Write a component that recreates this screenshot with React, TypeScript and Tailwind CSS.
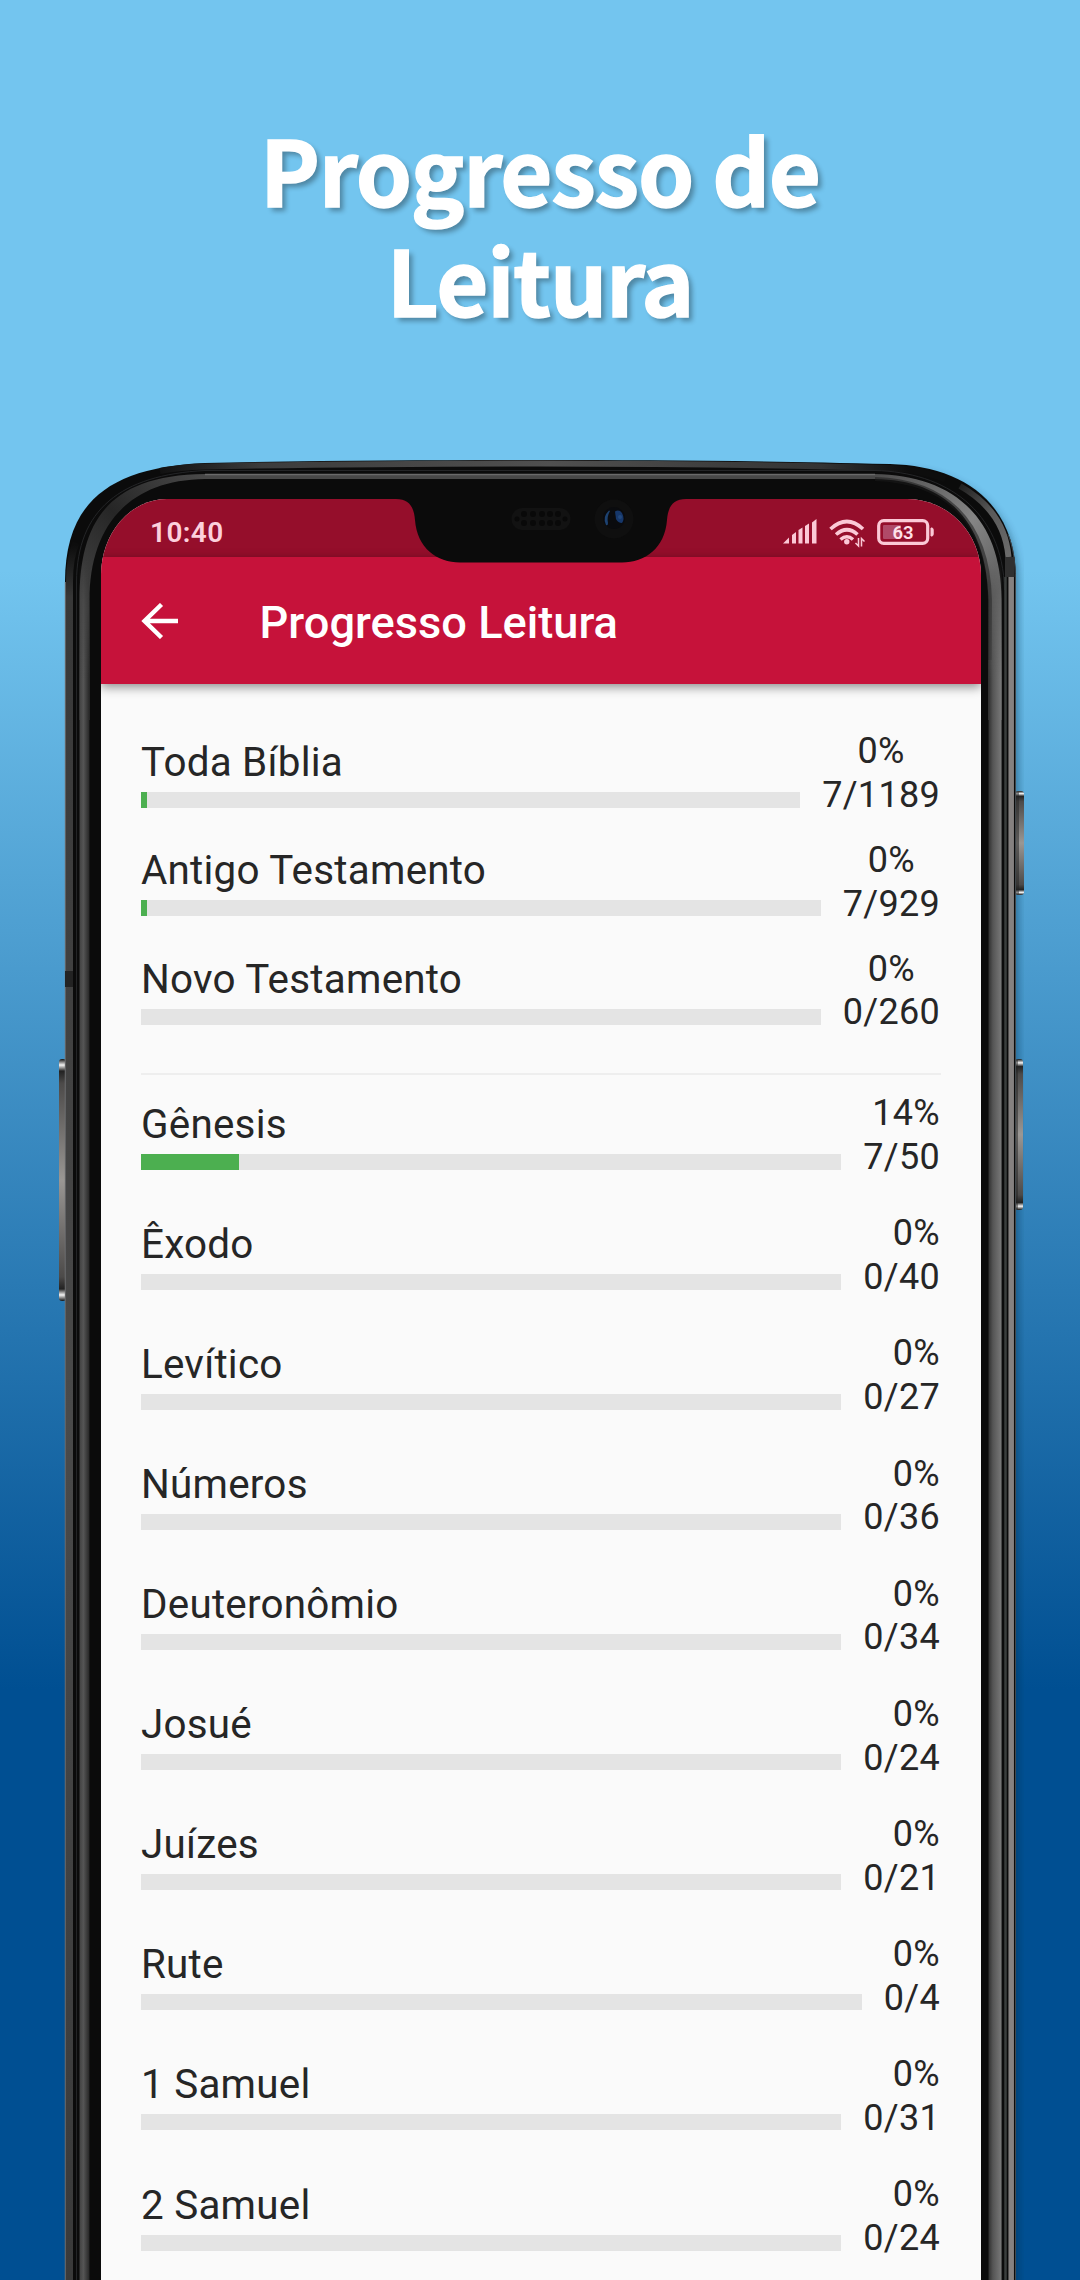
import React from 'react';

interface Progress {
  name: string;
  read: number;
  total: number;
}

const totals: Progress[] = [
  { name: 'Toda Bíblia', read: 7, total: 1189 },
  { name: 'Antigo Testamento', read: 7, total: 929 },
  { name: 'Novo Testamento', read: 0, total: 260 },
];

const books: Progress[] = [
  { name: 'Gênesis', read: 7, total: 50 },
  { name: 'Êxodo', read: 0, total: 40 },
  { name: 'Levítico', read: 0, total: 27 },
  { name: 'Números', read: 0, total: 36 },
  { name: 'Deuteronômio', read: 0, total: 34 },
  { name: 'Josué', read: 0, total: 24 },
  { name: 'Juízes', read: 0, total: 21 },
  { name: 'Rute', read: 0, total: 4 },
  { name: '1 Samuel', read: 0, total: 31 },
  { name: '2 Samuel', read: 0, total: 24 },
];

const ProgressRow: React.FC<{ item: Progress; centered?: boolean }> = ({ item, centered }) => {
  const percent = Math.floor((item.read / item.total) * 100);
  // anything started shows at least a sliver
  const width = item.read === 0 ? '0px' : percent === 0 ? '5.5px' : `${percent}%`;

  return (
    <div className="flex h-[87.600px] gap-[22px]">
      <div className="flex-1 pt-[9.200px]">
        <div className="h-[47px] text-[40.4px] leading-[47px] tracking-[0.230px] whitespace-nowrap">{item.name}</div>
        <div className="mt-[6px] h-[16px] bg-[#e4e4e4]">
          <div className="h-full bg-[#4caf50]" style={{ width }} />
        </div>
      </div>
      <div className={`pt-[0.800px] text-[36px] leading-[43.8px] tracking-[0.3px] ${centered ? 'text-center' : 'text-right'}`}>
        <div>{percent}%</div>
        <div>{item.read}/{item.total}</div>
      </div>
    </div>
  );
};

const PhoneFrame: React.FC = () => (
  <svg className="absolute inset-0" width="1080" height="2280" viewBox="0 0 1080 2280" fill="none">
    <defs>
      <linearGradient id="topRim" x1="150" x2="950" y1="0" y2="0" gradientUnits="userSpaceOnUse">
        <stop offset="0" stopColor="#0d0d0d" />
        <stop offset=".14" stopColor="#3c3c3c" />
        <stop offset=".5" stopColor="#505050" />
        <stop offset=".84" stopColor="#333" />
        <stop offset=".95" stopColor="#0d0d0d" />
      </linearGradient>
      <linearGradient id="leftRim" x1="0" x2="0" y1="545" y2="2280" gradientUnits="userSpaceOnUse">
        <stop offset="0" stopColor="#0d0d0d" />
        <stop offset=".03" stopColor="#383838" />
        <stop offset=".5" stopColor="#4a4a4a" />
        <stop offset="1" stopColor="#3a3a3a" />
      </linearGradient>
      <linearGradient id="leftInner" x1="79" x2="90" y1="0" y2="0" gradientUnits="userSpaceOnUse">
        <stop offset="0" stopColor="#3f3f3f" />
        <stop offset=".4" stopColor="#555" />
        <stop offset="1" stopColor="#222" />
      </linearGradient>
      <linearGradient id="leftCorner" x1="200" x2="80" y1="476" y2="600" gradientUnits="userSpaceOnUse">
        <stop offset="0" stopColor="#484848" />
        <stop offset=".5" stopColor="#262626" />
        <stop offset="1" stopColor="#444" />
      </linearGradient>
      <linearGradient id="rightInner" x1="988" x2="1002" y1="0" y2="0" gradientUnits="userSpaceOnUse">
        <stop offset="0" stopColor="#2b2b2b" />
        <stop offset=".35" stopColor="#555" />
        <stop offset=".9" stopColor="#757575" />
        <stop offset="1" stopColor="#8f8f8f" />
      </linearGradient>
      <linearGradient id="rightCorner" x1="875" x2="998" y1="478" y2="590" gradientUnits="userSpaceOnUse">
        <stop offset="0" stopColor="#4c4c4c" />
        <stop offset=".6" stopColor="#858585" />
        <stop offset="1" stopColor="#5e5e5e" />
      </linearGradient>
      <linearGradient id="rightRim" x1="950" x2="1014" y1="480" y2="560" gradientUnits="userSpaceOnUse">
        <stop offset="0" stopColor="#111" />
        <stop offset=".5" stopColor="#5a5a5a" />
        <stop offset="1" stopColor="#6e6e6e" />
      </linearGradient>
      <linearGradient id="fadeIn" x1="0" x2="0" y1="560" y2="680" gradientUnits="userSpaceOnUse">
        <stop offset="0" stopColor="#000" />
        <stop offset="1" stopColor="#fff" />
      </linearGradient>
      <mask id="sideMask" maskUnits="userSpaceOnUse" x="0" y="560" width="1080" height="1720">
        <rect y="560" width="1080" height="1720" fill="url(#fadeIn)" />
      </mask>
      <linearGradient id="button" x1="0" x2="0" y1="0" y2="1">
        <stop offset="0" stopColor="#111" />
        <stop offset=".025" stopColor="#f4f4f4" />
        <stop offset=".05" stopColor="#222" />
        <stop offset=".1" stopColor="#4c4a49" />
        <stop offset=".5" stopColor="#9a9794" />
        <stop offset=".9" stopColor="#4c4a49" />
        <stop offset=".95" stopColor="#222" />
        <stop offset=".975" stopColor="#f4f4f4" />
        <stop offset="1" stopColor="#111" />
      </linearGradient>
      <filter id="soft" x="-5%" y="-5%" width="110%" height="110%">
        <feGaussianBlur stdDeviation="4" />
      </filter>
    </defs>

    {/* shadow cast to the right */}
    <path d="M900 470C960 472 1018 505 1018 582V2290H900Z" fill="#062a45" opacity=".45" filter="url(#soft)" />

    {/* side buttons */}
    <rect x="59" y="1059" width="7" height="242" rx="3" fill="url(#button)" />
    <rect x="1015" y="791" width="9" height="104" rx="3" fill="url(#button)" />
    <rect x="1016" y="792" width="3" height="102" fill="#222" opacity=".5" />
    <rect x="1015" y="1059" width="8" height="151" rx="3" fill="url(#button)" />
    <rect x="1016" y="1060" width="2" height="149" fill="#222" opacity=".5" />

    {/* body */}
    <path d="M65 2280V582C65 500 112 467 205 463C330 460.5 430 460 540 460S750 460.5 890 464C960 466 1016 500 1016 580V2280Z" fill="#0b0b0b" />
    <path d="M160 471C176 468 190 467 205 466.500C330 464 430 463.500 540 463.500S750 464 890 468C910 469 930 473 945 479" stroke="url(#topRim)" strokeWidth="6" />
    <path d="M69.500 2280V582C69.500 565 71.500 553 76 543" stroke="url(#leftRim)" strokeWidth="7" />
    <path d="M65.300 2280V582" stroke="#77797b" strokeWidth="1" />
    <path d="M76.500 2280V582C77 510 120 475 205 470.500H875C945 472 1003 510 1004.500 590" stroke="#242527" strokeWidth="1" />
    <rect x="65" y="971" width="8" height="16" fill="#232323" />

    {/* inner rim */}
    <path d="M205 474H875V479H205C125 480 89.500 530 89.500 600V720H79.500V600C79.500 525 105 475 205 474Z" fill="url(#leftCorner)" />
    <path d="M205 474.500H875" stroke="#6a6a6a" strokeWidth="1.500" />
    <path d="M79.500 2280V560H89.500V2280Z" fill="url(#leftInner)" mask="url(#sideMask)" />
    <path d="M875 474C945 475 1001.500 510 1001.500 600V720H988.500V600C987 520 945 480 875 479Z" fill="url(#rightCorner)" />
    <path d="M875 479C943 481 988 518 990 600V660" stroke="#1c1c1c" strokeWidth="4" opacity=".55" />
    <path d="M988.500 2280V560H1001.500V2280Z" fill="url(#rightInner)" mask="url(#sideMask)" />

    {/* right outer rim */}
    <path d="M960 486C990 503 1006 527 1008.500 557" stroke="url(#rightRim)" strokeWidth="6" />
    <path d="M1011.200 2280V577" stroke="#858180" strokeWidth="5.500" />
    <path d="M1005.500 2280V577" stroke="#3b3f3e" strokeWidth="2.500" />
    <path d="M1015.500 2280V580C1015.500 562 1013 547 1008 534" stroke="#41484c" strokeWidth="1" />
    <rect x="1005" y="557" width="9.500" height="20" fill="#303030" />
  </svg>
);

const Notch: React.FC = () => (
  <svg className="absolute left-[295px] top-0" width="290" height="64" viewBox="396 499 290 64">
    <path d="M396 498V499C410 499 414 508 415 520C417 548 437 562.500 460 562.500H622C645 562.500 665 548 667 520C668 508 672 499 686 499V498Z" fill="#0b0b0b" />
    <rect x="511.500" y="508" width="59" height="22" rx="11" fill="#121212" />
    {[524, 533, 542, 550, 558].map((x) => (
      <g key={x} fill="#090909">
        <circle cx={x} cy="514" r="3" />
        <circle cx={x} cy="523" r="3" />
      </g>
    ))}
    <circle cx="517" cy="519" r="2.500" fill="#090909" />
    <circle cx="565" cy="519" r="2.500" fill="#090909" />
    <circle cx="614" cy="519" r="19.500" fill="#0f0f0f" />
    <circle cx="614" cy="518" r="11" fill="#0a0b0e" />
    <path d="M609 510.500Q602 517 606 525Q608 526 608 523Q606.500 517 610 511Z" fill="#1d4270" />
    <path d="M615 511.500Q619 509 622 513Q625 519 622 523Q618 523 616 519Z" fill="#16376a" />
    <circle cx="620" cy="517" r="2" fill="#23487c" />
  </svg>
);

const StatusIcons: React.FC = () => (
  <svg className="mt-[17px]" width="154" height="32" viewBox="781 516 154 32" fill="none">
    <g fill="#fbc9d6">
      <path d="M783 543.500L789 537.500V543.500Z" />
      <path d="M792 543.500V535L796 532V543.500Z" />
      <path d="M798.500 543.500V530L802.500 527.500V543.500Z" />
      <path d="M805 543.500V526L809 523.500V543.500Z" />
      <path d="M812 543.500V522.500L816.500 519V543.500Z" />
    </g>
    <g stroke="#fbc9d6" strokeWidth="3.600">
      <path d="M830.500 529Q847 514 863 529" />
      <path d="M836 534.500Q847 525 857.500 534.500" />
      <path d="M840.500 539.500Q847 534 853 539.500" />
    </g>
    <circle cx="846.800" cy="541.800" r="2.700" fill="#fbc9d6" />
    <path d="M858.500 538V546L855.500 543M861.500 546.500V538.500L864.500 541.500" stroke="#fbc9d6" strokeWidth="1.500" />
    <rect x="878.700" y="520.700" width="49" height="22.600" rx="5" stroke="#fbc9d6" strokeWidth="3.200" />
    <rect x="883" y="525" width="18" height="14" rx="1" fill="#b04a68" />
    <path d="M931 528H932Q933.200 528 933.200 530V534Q933.200 536 932 536H931Z" fill="#fbc9d6" stroke="#fbc9d6" />
    <text x="903" y="538.500" textAnchor="middle" fill="#ffe0e8" fontFamily="Roboto, sans-serif" fontWeight="600" fontSize="18.500">63</text>
  </svg>
);

const App: React.FC = () => {
  return (
    <div className="relative h-[2280px] w-[1080px] overflow-hidden bg-[linear-gradient(180deg,#73c5ef_0px,#73c5ef_570px,#004f92_1690px)] font-['Roboto',sans-serif] text-[#262626]">
      <PhoneFrame />
      <h1 className="relative h-[499px] pt-[112.500px] text-center font-['Noto_Sans_CJK_SC',sans-serif] text-[90px] leading-[110.5px] font-bold tracking-[-1.250px] text-white [-webkit-text-stroke:1.5px_white] [text-shadow:4px_4px_5px_rgba(0,0,0,0.32)]">
        Progresso de
        <br />
        Leitura
      </h1>

      <div className="relative ml-[101px] h-[1781px] w-[880px] overflow-hidden rounded-tl-[66px_76px] rounded-tr-[74px_76px] bg-[#fafafa]">
        <div className="flex h-[58px] justify-between bg-[#950e2b] pr-[46px] pl-[49px]">
          <span className="pt-[19px] text-[28px] leading-[30px] font-semibold tracking-[0.4px] text-[#fcd0dc]">10:40</span>
          <StatusIcons />
        </div>

        <header className="relative flex h-[127px] items-center bg-[#c6123a] pl-[40px] text-white shadow-[0_3px_10px_rgba(0,0,0,0.45)]">
          <svg width="38" height="36" viewBox="0 0 38 36" fill="none" stroke="currentColor" strokeWidth="4.400">
            <path d="M37 18H4M20.500 1.500L3.500 18L20.500 34.500" />
          </svg>
          <h2 className="ml-[80.500px] pt-[5px] text-[45.200px] leading-[52px] font-medium">Progresso Leitura</h2>
        </header>
        <Notch />

        <main className="pr-[41px] pl-[40px] pt-[45.500px]">
          <div className="-mr-px flex h-[345px] flex-col gap-[21.100px] border-b-2 border-[#eeeeee] pr-px">
            {totals.map((t) => (
              <ProgressRow key={t.name} item={t} centered />
            ))}
          </div>
          <div className="flex flex-col gap-[32.500px] pt-[17px]">
            {books.map((b) => (
              <ProgressRow key={b.name} item={b} />
            ))}
          </div>
        </main>
      </div>
    </div>
  );
};

export default App;
